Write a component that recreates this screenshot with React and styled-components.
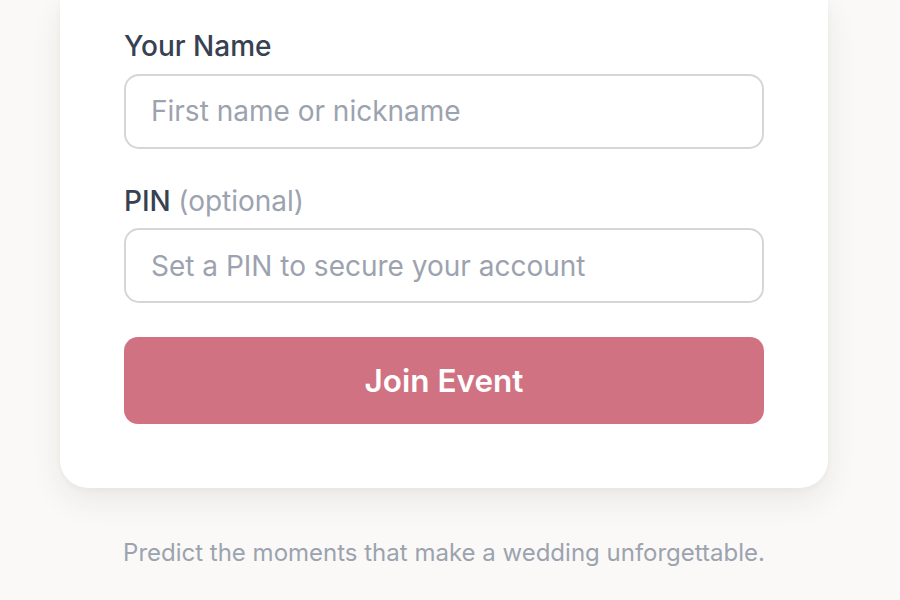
import React from "react";
import styled, { createGlobalStyle } from "styled-components";

const GlobalStyle = createGlobalStyle`
    body {
        margin: 0;
        background: #faf9f7;
        font-family: Inter, "Noto Sans", sans-serif;
        -webkit-font-smoothing: antialiased;
    }
`;

const Page = styled.div`
    width: 768px;
    margin-left: 60px;
    display: flex;
    flex-direction: column;
`;

const Card = styled.div`
    background: #ffffff;
    border-radius: 0 0 28px 28px;
    box-shadow: 0 12px 32px rgba(60, 40, 30, 0.08), 0 2px 6px rgba(60, 40, 30, 0.04);
    padding: 29px 64px 64px;
    display: flex;
    flex-direction: column;
    gap: 35px;
`;

const Field = styled.div`
    display: flex;
    flex-direction: column;
`;

const Label = styled.label`
    display: block;
    font-size: 28px;
    line-height: 35px;
    font-weight: 500;
    color: #374151;
    margin-bottom: 9.5px;
`;

const Optional = styled.span`
    color: #9ca3af;
    font-weight: 400;
`;

const Input = styled.input`
    box-sizing: border-box;
    width: 100%;
    height: 75px;
    padding: 0 25px;
    border: 2px solid #d6d6d9;
    border-radius: 15px;
    font-family: inherit;
    font-size: 28px;
    color: #374151;
    background: #fff;
    outline: none;

    &::placeholder {
        color: #9ca3af;
    }
`;

const Button = styled.button`
    margin-top: -1px;
    height: 87px;
    border: none;
    border-radius: 14px;
    background: #d07282;
    color: #ffffff;
    font-family: inherit;
    font-size: 31.5px;
    font-weight: 600;
    cursor: pointer;
`;

const Tagline = styled.p`
    margin: 48px 0 0;
    text-align: center;
    font-size: 24px;
    line-height: 34px;
    color: #9ca3af;
`;

const App = () => {
    return (
        <>
            <GlobalStyle />
            <Page>
                <Card>
                    <Field>
                        <Label>Your Name</Label>
                        <Input placeholder="First name or nickname" />
                    </Field>

                    <Field>
                        <Label>
                            PIN <Optional>(optional)</Optional>
                        </Label>
                        <Input placeholder="Set a PIN to secure your account" />
                    </Field>

                    <Button>Join Event</Button>
                </Card>

                <Tagline>Predict the moments that make a wedding unforgettable.</Tagline>
            </Page>
        </>
    );
};

export default App;
